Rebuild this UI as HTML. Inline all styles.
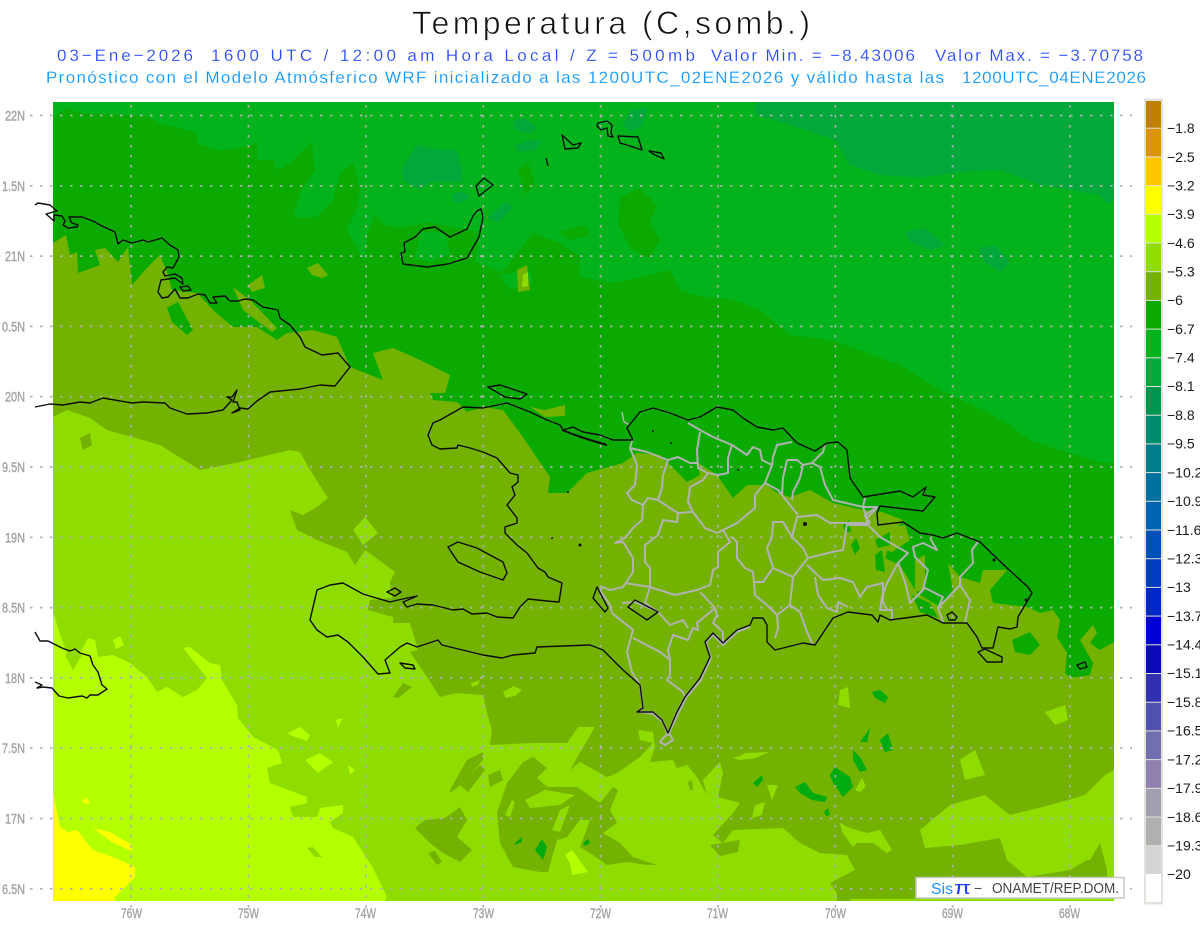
<!DOCTYPE html>
<html><head><meta charset="utf-8"><title>Temperatura</title>
<style>html,body{margin:0;padding:0;background:#fff;overflow:hidden}svg{display:block}text{font-family:"Liberation Sans",sans-serif;white-space:pre}</style></head>
<body>
<svg width="1200" height="927" viewBox="0 0 1200 927" xmlns="http://www.w3.org/2000/svg">
<rect width="1200" height="927" fill="#fff"/>
<!-- titles -->
<text x="412" y="34" font-size="32" fill="#111" stroke="#fff" stroke-width=".7" textLength="398" lengthAdjust="spacing">Temperatura (C,somb.)</text>
<g font-size="17" fill="#2848ff" stroke="#fff" stroke-width=".15">
<text x="57" y="61" textLength="136" lengthAdjust="spacing">03−Ene−2026</text>
<text x="211" y="61" textLength="484" lengthAdjust="spacing">1600 UTC / 12:00 am Hora Local / Z = 500mb</text>
<text x="711" y="61" textLength="204" lengthAdjust="spacing">Valor Min. = −8.43006</text>
<text x="935" y="61" textLength="208" lengthAdjust="spacing">Valor Max. = −3.70758</text>
</g>
<g font-size="17" fill="#0a96ff" stroke="#fff" stroke-width=".15">
<text x="46" y="83" textLength="898" lengthAdjust="spacing">Pronóstico con el Modelo Atmósferico WRF inicializado a las 1200UTC_02ENE2026 y válido hasta las</text>
<text x="962" y="83" textLength="184" lengthAdjust="spacing">1200UTC_04ENE2026</text>
</g>
<!-- map fields -->
<svg x="53" y="102" width="1061" height="799" viewBox="53 102 1061 799">
<rect x="53" y="102" width="1061" height="799" fill="#03b31c"/>
<g fill="#03a83a">
<polygon points="755,102 1114,102 1114,198 1108,205 1100,195 1040,185 1000,170 960,172 920,178 880,175 850,165 835,140 790,125 755,115"/>
<polygon points="402,168 416,145 440,150 457,150 462,170 462,182 430,182 420,190 403,180"/>
<polygon points="513,120 525,118 537,128 530,133 515,130"/>
<polygon points="515,145 530,140 542,141 535,150 518,152"/>
<polygon points="452,195 462,191 470,197 460,203 453,202"/>
<polygon points="488,218 505,202 513,207 498,223"/>
<polygon points="623,125 630,110 647,108 643,125 630,132"/>
<polygon points="905,232 925,228 945,245 930,250 910,242"/>
<polygon points="978,248 995,245 1010,262 1000,272 985,262"/>
</g>
<polygon fill="#0aaa00" points="53,117 67,108 80,113 147,116 160,123 197,133 197,143 217,150 240,148 257,143 257,160 273,160 277,170 290,163 312,142 315,170 300,193 293,217 317,217 333,200 340,173 353,163 360,190 358,205 347,230 365,263 367,235 375,215 385,225 400,228 430,222 450,227 480,232 475,262 500,272 510,262 533,233 560,243 580,257 580,277 613,283 650,275 670,270 680,290 700,296 735,300 760,310 790,335 830,340 860,350 900,365 940,390 983,410 1010,425 1030,440 1060,450 1100,462 1114,463 1114,901 53,901"/>
<g fill="#03b31c">
<polygon points="420,232 445,232 450,255 430,262 415,258"/>
<polygon points="500,275 530,270 533,282 510,290"/>
</g>
<g fill="#0aaa00">
<polygon points="620,197 640,188 657,205 650,222 660,240 650,258 632,250 618,225"/>
<polygon points="518,170 528,162 535,185 525,195"/>
<polygon points="560,232 585,225 590,235 570,240"/>
</g>
<polygon fill="#73b200" points="53,243 66,235 70,255 77,252 78,273 100,265 95,250 105,248 118,262 128,247 132,285 145,270 160,255 168,275 172,290 197,293 215,312 233,327 257,327 277,340 287,333 313,330 337,337 350,367 383,380 373,353 393,348 420,360 450,375 445,393 430,393 433,400 457,402 467,412 483,407 503,410 520,433 550,477 548,493 567,493 587,473 623,463 637,453 660,455 673,468 687,482 700,475 697,462 717,475 733,498 747,485 767,485 777,493 790,497 810,490 833,503 863,510 882,512 903,520 892,535 885,558 900,565 917,593 940,607 953,590 948,563 960,577 980,583 983,570 1007,570 990,590 993,603 1027,607 1040,613 1053,610 1060,620 1057,637 1067,653 1065,673 1070,678 1090,675 1093,663 1080,640 1093,625 1097,633 1090,643 1100,650 1114,642 1114,901 53,901"/>
<g fill="#0aaa00">
<polygon points="167,308 178,302 193,330 187,335 172,322"/>
<polygon points="900,528 925,530 945,555 945,575 920,578 905,560"/>
</g>
<g fill="#73b200">
<polygon points="307,268 318,263 328,275 322,278 312,275"/>
<polygon points="248,285 262,275 265,288 252,292"/>
<polygon points="530,407 545,410 565,405 565,416 545,417"/>
<polygon points="233,287 250,300 277,328 272,332 243,310"/>
<polygon points="517,270 527,265 530,290 518,292"/>
</g>
<polygon fill="#8fdc00" points="523,275 528,272 528,286 522,287"/>
<g fill="#73b200">
<polygon points="875,530 905,525 910,540 892,552 880,548"/>
<polygon points="915,560 925,555 925,590 915,592"/>
<polygon points="1000,605 1030,610 1040,625 1020,640 1000,625"/>
</g>
<g fill="#0aaa00">
<polygon points="1012,640 1030,632 1040,645 1030,655 1015,652"/>
<polygon points="843,525 849,520 851,532 845,532"/>
<polygon points="851,545 856,538 860,548 855,555"/>
<polygon points="875,540 890,532 890,545 878,548"/>
<polygon points="875,555 882,550 885,572 876,570"/>
<polygon points="912,595 930,603 938,618 920,612"/>
</g>
<polygon fill="#8fdc00" points="53,417 67,410 90,418 107,430 160,445 200,470 240,462 290,450 300,452 310,470 328,498 317,507 303,515 290,510 297,530 317,540 347,552 355,565 365,550 383,563 395,572 390,582 392,598 370,600 368,610 393,617 393,623 410,623 418,650 410,652 427,677 440,697 457,693 483,695 487,713 492,730 490,745 533,743 567,743 578,727 595,727 570,770 580,762 607,777 617,773 640,757 653,743 640,740 638,730 653,732 655,747 650,762 673,760 677,768 687,765 697,777 707,795 703,780 720,762 723,773 718,797 740,803 733,813 713,835 723,843 733,830 783,828 800,843 820,853 847,855 855,870 830,883 837,893 837,901 53,901"/>
<g fill="#73b200">
<polygon points="80,438 90,433 92,445 83,450"/>
<polygon points="393,697 403,683 412,687 398,698"/>
<polygon points="415,828 425,820 445,818 460,807 467,820 457,837 472,850 460,862 443,853 430,843"/>
<polygon points="450,790 467,760 483,752 483,760 463,783 450,793"/>
<polygon points="497,813 507,783 523,762 533,757 547,768 537,778 547,787 577,787 600,803 613,787 618,790 610,810 617,823 603,833 620,843 633,857 657,865 647,865 627,862 607,865 590,853 580,847 590,820 580,820 567,837 557,840 548,872 540,872 513,867 500,843"/>
<polygon points="460,785 480,765 485,770 468,792"/>
<polygon points="428,853 435,851 442,862 437,865"/>
<polygon points="488,775 500,770 503,780 490,787"/>
<polygon points="307,848 313,847 322,857 315,857"/>
<polygon points="688,782 692,780 693,790 690,790"/>
<polygon points="710,845 740,840 738,852 720,856"/>
</g>
<g fill="#8fdc00">
<polygon points="505,815 512,800 515,802 510,817"/>
<polygon points="525,800 545,790 575,795 560,805 530,808"/>
<polygon points="560,810 570,805 560,832 552,830"/>
<polygon points="353,530 365,517 378,533 363,545"/>
<polygon points="471,683 480,680 478,685 472,687"/>
<polygon points="503,692 514,686 522,690 515,696 506,698"/>
<polygon points="840,823 850,828 867,833 880,830 892,850 887,853 873,843 857,843 853,847 842,832"/>
<polygon points="733,758 742,755 745,753 770,752 755,758 740,760"/>
<polygon points="755,805 765,802 762,815 752,818"/>
<polygon points="767,785 778,785 772,800"/>
<polygon points="838,705 840,690 848,687 850,708"/>
<polygon points="855,790 862,778 866,786 860,792"/>
<polygon points="920,830 950,805 985,795 1010,815 1050,805 1085,795 1105,775 1114,770 1114,901 850,901 850,899 1107,898 1107,870 1100,843 1090,860 1087,860 1070,870 1027,877 1007,860 1000,838 960,845 925,848"/>
<polygon points="1045,712 1065,705 1068,720 1055,725"/>
<polygon points="960,760 975,750 985,775 965,780"/>
</g>
<polygon fill="#b4ff00" points="53,612 62,640 73,670 80,653 88,638 95,640 98,657 113,655 130,663 147,677 157,692 167,687 183,697 197,690 207,678 183,648 190,647 210,663 220,665 222,680 237,705 238,718 253,737 278,750 282,763 267,768 270,783 307,797 307,803 290,807 293,817 317,817 320,808 343,805 343,813 330,822 333,828 353,837 373,868 387,897 385,901 53,901"/>
<g fill="#8fdc00">
<polygon points="72,650 82,655 73,670 65,655"/>
<polygon points="307,848 313,847 322,857 315,857"/>
</g>
<polygon fill="#b4ff00" points="113,640 120,636 124,645 116,649"/>
<g fill="#b4ff00">
<polygon points="288,733 300,727 310,735 307,741 290,735"/>
<polygon points="305,760 320,753 333,762 318,773"/>
<polygon points="348,765 355,770 350,775"/>
<polygon points="336,720 342,718 338,728"/>
<polygon points="565,855 572,850 588,872 572,875 570,863"/>
</g>
<g fill="#ffff00">
<polygon points="53,792 60,827 68,832 77,830 93,850 113,857 135,867 135,877 115,897 115,901 53,901"/>
<polygon points="93,828 110,832 132,845 132,851 113,843"/>
<polygon points="82,800 87,798 90,804 85,804"/>
</g>
<g fill="#00ab10">
<polygon points="872,692 880,690 888,697 885,703 875,698"/>
<polygon points="880,740 888,733 893,750 885,752"/>
<polygon points="860,742 870,728 867,742"/>
<polygon points="853,750 860,757 867,770 860,772 853,760"/>
<polygon points="830,775 835,767 850,777 853,787 843,797 833,783"/>
<polygon points="795,787 805,782 813,793 827,797 825,802 812,800 800,793"/>
<polygon points="753,783 762,775 763,780 757,787"/>
<polygon points="824,812 828,808 830,815 826,816"/>
<polygon points="535,850 542,839 547,847 543,860"/>
<polygon points="515,843 522,837 522,842 515,845"/>
<polygon points="583,843 588,839 590,843 585,846"/>
</g>
</svg>
<!-- grid -->
<g stroke="#b0b0b0" stroke-width="1.7" stroke-dasharray="2.5 7.5" fill="none">
<path d="M30 115.5H1132M30 185.8H1132M30 256.1H1132M30 326.4H1132M30 396.7H1132M30 467H1132M30 537.3H1132M30 607.6H1132M30 677.9H1132M30 748.2H1132M30 818.5H1132M30 888.8H1132"/>
<path d="M131 105V908M248.5 105V908M366 105V908M483.3 105V908M600.6 105V908M718 105V908M835.3 105V908M952.6 105V908M1070 105V908"/>
</g>
<!-- provinces -->
<g fill="none" stroke="#b2b2b2" stroke-width="2" stroke-linejoin="round">
<polyline points="633,438 630,448 637,465 635,485 627,493 632,500 643,505 642,520 633,528 625,538 615,543 623,542 633,558 633,572 623,587 610,590 603,587 600,590 610,605 612,613 633,630 627,652 632,672 640,685 643,708 637,712 653,712 662,720 668,733 677,712 685,697"/>
<polyline points="688,423 700,430 713,437 732,445 747,455 753,447 760,450 762,460 772,465 773,457 777,445 792,442"/>
<polyline points="700,432 697,450 698,468 708,473 718,475 728,473 728,458 732,445"/>
<polyline points="630,448 647,452 660,457 668,460 678,457 690,463 697,463"/>
<polyline points="668,460 663,475 662,488 658,500 673,510 678,513 692,512"/>
<polyline points="643,505 648,498 658,500"/>
<polyline points="708,473 703,480 690,487 688,502 693,512 705,528 717,533 723,530 737,523 755,508 755,495 765,483 772,465"/>
<polyline points="678,513 677,522 663,520 658,535 645,545 645,562 650,568 650,587"/>
<polyline points="625,583 650,587 675,595 697,590 710,585 713,570 718,567 718,552 730,542 723,530"/>
<polyline points="732,537 737,542 737,558 745,568 753,572 755,595 767,605 777,615 778,628 775,638"/>
<polyline points="755,582 763,582 773,568 793,577 790,605 777,615"/>
<polyline points="773,568 767,548 772,537 773,522 783,522 792,537 803,548 808,558 800,568 793,577"/>
<polyline points="792,537 797,517 817,515 830,523 847,523 843,550 832,552 808,558"/>
<polyline points="807,565 823,580 840,578 853,582 860,597 867,587 883,583 883,602 887,610"/>
<polyline points="815,577 818,595 827,608 837,612 838,602 848,607"/>
<polyline points="790,605 800,612 807,632 813,645"/>
<polyline points="787,460 783,478 782,495 790,505 798,515"/>
<polyline points="787,460 797,460 803,465 812,463 823,452 825,445"/>
<polyline points="803,465 800,478 793,492 792,500"/>
<polyline points="812,463 820,467 825,485 833,500 863,507 867,518 877,508"/>
<polyline points="765,483 778,490 782,495"/>
<polyline points="847,523 870,523 867,518"/>
<polyline points="633,638 660,652 670,660 670,675 667,680 683,692 685,697"/>
<polyline points="670,660 668,650 673,635 688,640 693,628 698,630 697,623 715,608 700,592"/>
<polyline points="715,608 717,615 713,623 723,632 723,642"/>
<polyline points="650,587 645,603 658,612 670,625 683,620 688,628"/>
<polyline points="622,603 635,602 658,612"/>
<polyline points="865,498 863,507 877,507 865,515 868,525 880,537 908,553 898,563 887,583 882,597 880,610 892,610 892,620"/>
<polyline points="868,525 847,525"/>
<polyline points="898,563 905,582 910,603 923,590 928,570 915,557 913,547 923,543 937,550 930,538"/>
<polyline points="923,587 943,597 938,608 943,622"/>
<polyline points="938,608 960,585 960,577 973,563 972,550 978,542"/>
<polyline points="960,585 970,600 965,622"/>
<polyline points="622,412 624,422 630,425" stroke-width="1.5"/>
<polyline points="642,708 640,712 653,714 663,722 668,735 678,714 686,698 701,680 711,658 706,642 713,635 723,645 737,632 750,627"/>
<polyline points="663,738 669,733 673,740 665,745 660,742 663,738"/>
</g>
<!-- coast -->
<g fill="none" stroke="#0c0c0c" stroke-width="1.4" stroke-linejoin="round">
<polyline points="35,205 38,203 50,205 57,211 46,214 54,221 54,215 62,216 65,221 63,225 68,228 77,227 78,225 72,223 69,217 82,217 93,221 100,225 115,232 118,244 123,240 132,243 143,240 148,242 162,238 170,245 178,250 179,257 173,268 167,267 163,272 165,276 175,274 182,278 183,284 175,278 161,280 158,292 162,298 168,297 175,289 180,298 188,298 198,294 205,295 210,303 217,303 213,297 225,296 230,301 238,301 245,299 253,300 263,307 278,310 280,318 290,325 300,337 305,347 322,355 338,353 350,367 335,386 320,385 300,389 270,392 257,401 248,409 240,408 232,413 240,410 237,402 233,402 237,390 232,397 227,397 232,400 223,410 207,413 187,414 170,408 165,403 143,402 132,403 103,398 90,403 80,402 63,405 50,404 35,407"/>
<polygon points="180,287 188,286 191,290 183,291"/>
<polyline points="35,632 40,641 48,641 62,648 70,651 75,649 80,653 90,656 93,665 98,672 102,685 107,689 98,695 90,695 87,698 82,696 68,698 59,696 52,688 43,687 37,688 42,685 35,682"/>
<polygon points="401,253 405,252 404,243 415,237 423,229 435,227 450,237 467,229 473,216 477,211 481,209 483,217 479,237 467,258 448,264 427,267 403,264"/>
<polygon points="476,186 484,178 493,185 479,196"/>
<polygon points="562,135 573,145 581,143 578,148 565,149"/>
<polyline points="546,158 548,166"/>
<polygon points="598,123 607,121 612,125 611,133 613,137 608,136 607,128 601,130 597,126"/>
<polygon points="618,136 638,137 642,150 630,146 620,143"/>
<polygon points="649,151 661,153 664,159 653,154"/>
<polyline points="633,440 613,440 600,435 583,432 573,427 563,430 560,425 547,420 530,412 507,403 483,408 463,407 440,420 433,423 428,435 432,445 440,449 457,448 458,445 470,448 483,452 497,458 510,473 518,475 518,482 512,487 515,495 507,505 517,518 517,523 505,527 505,533 517,545 527,553 538,568 545,572 548,577 562,583 559,602 547,601 528,599 520,607 513,618 497,617 487,613 472,614 463,609 453,610 433,605 417,604 407,607 403,602 415,597 417,596 398,600 390,602 373,597 363,594 343,583 330,585 317,590 310,620 317,630 327,637 338,635 348,642 363,657 378,674 390,673 385,660 400,647 407,643 417,647 438,640 442,645 483,655 502,658 513,655 535,653 537,647 563,646 590,645 603,650 623,670 640,685 643,708 637,712 653,712 662,720 668,733 677,712 685,697 700,678 710,657 705,642 713,633 723,643 737,630 750,625 753,618 763,618 767,625 767,642 775,650 803,643 815,645 833,618 848,612 872,615 878,622 880,615 890,620 927,615 943,623 967,623 977,637 982,648 993,648 998,627 1010,629 1017,627 1018,617 1032,593 1028,587 1007,568 980,542 957,533 943,538 933,535 920,533 903,522 878,525 877,513 880,506 923,511 935,497 923,495 926,487 913,497 900,491 863,497 850,478 847,450 838,442 827,443 815,451 797,443 783,428 773,430 757,427 743,418 733,410 717,407 700,417 688,420 670,413 653,408 640,412 627,428 633,440"/>
<polygon points="978,652 985,649 1002,657 1002,662 987,662"/>
<polygon points="947,615 952,612 957,617 955,620 949,620"/>
<polygon points="1077,665 1085,662 1087,667 1080,669"/>
<polygon points="488,387 500,385 527,394 520,399 505,397"/>
<polygon points="448,547 458,542 477,548 503,562 507,573 503,580 480,572 458,562"/>
<polygon points="387,592 395,588 401,592 395,596"/>
<polygon points="400,663 413,665 415,669 405,668"/>
<polygon points="628,607 635,600 658,612 647,620"/>
<polygon points="593,598 597,587 608,608 605,612"/>
<polyline points="562,430 575,435 590,440 607,445" stroke-width="2"/>
</g>
<g fill="#111">
<circle cx="653" cy="431" r="1"/><circle cx="671" cy="443" r="1"/><circle cx="738" cy="470" r="1"/><circle cx="805" cy="524" r="2"/><circle cx="994" cy="560" r="1.5"/><circle cx="1026" cy="600" r="1.5"/><circle cx="568" cy="492" r="1"/><circle cx="552" cy="538" r="1"/><circle cx="580" cy="545" r="1.5"/>
</g>
<!-- axis labels -->
<g font-size="14" fill="#a4a4a4" stroke="#a4a4a4" stroke-width=".4">
<text x="5" y="120.5" textLength="20" lengthAdjust="spacingAndGlyphs">22N</text>
<text x="2" y="190.8" textLength="23" lengthAdjust="spacingAndGlyphs">1.5N</text>
<text x="5" y="261" textLength="20" lengthAdjust="spacingAndGlyphs">21N</text>
<text x="2" y="331.4" textLength="23" lengthAdjust="spacingAndGlyphs">0.5N</text>
<text x="5" y="401.7" textLength="20" lengthAdjust="spacingAndGlyphs">20N</text>
<text x="2" y="472" textLength="23" lengthAdjust="spacingAndGlyphs">9.5N</text>
<text x="5" y="542.3" textLength="20" lengthAdjust="spacingAndGlyphs">19N</text>
<text x="2" y="612.6" textLength="23" lengthAdjust="spacingAndGlyphs">8.5N</text>
<text x="5" y="682.9" textLength="20" lengthAdjust="spacingAndGlyphs">18N</text>
<text x="2" y="753.2" textLength="23" lengthAdjust="spacingAndGlyphs">7.5N</text>
<text x="5" y="823.5" textLength="20" lengthAdjust="spacingAndGlyphs">17N</text>
<text x="2" y="893.8" textLength="23" lengthAdjust="spacingAndGlyphs">6.5N</text>
<text x="121" y="918" textLength="21" lengthAdjust="spacingAndGlyphs">76W</text>
<text x="238" y="918" textLength="21" lengthAdjust="spacingAndGlyphs">75W</text>
<text x="355" y="918" textLength="21" lengthAdjust="spacingAndGlyphs">74W</text>
<text x="473" y="918" textLength="21" lengthAdjust="spacingAndGlyphs">73W</text>
<text x="590" y="918" textLength="21" lengthAdjust="spacingAndGlyphs">72W</text>
<text x="707" y="918" textLength="21" lengthAdjust="spacingAndGlyphs">71W</text>
<text x="825" y="918" textLength="21" lengthAdjust="spacingAndGlyphs">70W</text>
<text x="942" y="918" textLength="21" lengthAdjust="spacingAndGlyphs">69W</text>
<text x="1059" y="918" textLength="21" lengthAdjust="spacingAndGlyphs">68W</text>
</g>
<!-- logo box -->
<rect x="916" y="877.5" width="208" height="20.5" fill="#fff" stroke="#c8c8c8" stroke-width="1.5"/>
<text x="931" y="894" font-size="16" fill="#1e90ff" textLength="22" lengthAdjust="spacingAndGlyphs">Sis</text>
<text x="954" y="894" font-size="18" fill="#2040ff" textLength="17" lengthAdjust="spacingAndGlyphs">π</text>
<text x="974" y="893" font-size="14" fill="#444">−</text>
<text x="992" y="893" font-size="14.5" fill="#444" textLength="127" lengthAdjust="spacingAndGlyphs">ONAMET/REP.DOM.</text>
<!-- colorbar -->
<rect x="1144" y="98.5" width="19" height="806" fill="#e2e2dc"/>
<rect x="1146" y="101" width="15" height="26.7" fill="#c08000"/>
<rect x="1146" y="128.7" width="15" height="27.7" fill="#dc9400"/>
<rect x="1146" y="157.4" width="15" height="27.7" fill="#ffc400"/>
<rect x="1146" y="186.1" width="15" height="27.7" fill="#ffff00"/>
<rect x="1146" y="214.8" width="15" height="27.7" fill="#b4ff00"/>
<rect x="1146" y="243.5" width="15" height="27.7" fill="#8fdc00"/>
<rect x="1146" y="272.2" width="15" height="27.7" fill="#73b200"/>
<rect x="1146" y="300.9" width="15" height="27.7" fill="#0aaa00"/>
<rect x="1146" y="329.6" width="15" height="27.7" fill="#03b31c"/>
<rect x="1146" y="358.3" width="15" height="27.7" fill="#03a83a"/>
<rect x="1146" y="387" width="15" height="27.7" fill="#009650"/>
<rect x="1146" y="415.7" width="15" height="27.7" fill="#008c6e"/>
<rect x="1146" y="444.4" width="15" height="27.7" fill="#007d8c"/>
<rect x="1146" y="473.1" width="15" height="27.7" fill="#0070a0"/>
<rect x="1146" y="501.8" width="15" height="27.7" fill="#0064b4"/>
<rect x="1146" y="530.5" width="15" height="27.7" fill="#0050bc"/>
<rect x="1146" y="559.2" width="15" height="27.7" fill="#003cc0"/>
<rect x="1146" y="587.9" width="15" height="27.7" fill="#0028c8"/>
<rect x="1146" y="616.6" width="15" height="27.7" fill="#0000d4"/>
<rect x="1146" y="645.3" width="15" height="27.7" fill="#0a0ab8"/>
<rect x="1146" y="674" width="15" height="27.7" fill="#3030b0"/>
<rect x="1146" y="702.7" width="15" height="27.7" fill="#5050b0"/>
<rect x="1146" y="731.4" width="15" height="27.7" fill="#7070b0"/>
<rect x="1146" y="760.1" width="15" height="27.7" fill="#9080b0"/>
<rect x="1146" y="788.8" width="15" height="27.7" fill="#a0a0b0"/>
<rect x="1146" y="817.5" width="15" height="27.7" fill="#b0b0b0"/>
<rect x="1146" y="846.2" width="15" height="27.7" fill="#d4d4d4"/>
<rect x="1146" y="874" width="15" height="28" fill="#fff"/>
<g font-size="14" fill="#1a1a1a">
<text x="1167" y="133">−1.8</text><text x="1167" y="162">−2.5</text><text x="1167" y="190.5">−3.2</text><text x="1167" y="219">−3.9</text><text x="1167" y="248">−4.6</text><text x="1167" y="276.5">−5.3</text><text x="1167" y="305">−6</text><text x="1167" y="334">−6.7</text><text x="1167" y="362.5">−7.4</text><text x="1167" y="391">−8.1</text><text x="1167" y="420">−8.8</text><text x="1167" y="448.5">−9.5</text><text x="1167" y="477.5">−10.2</text><text x="1167" y="506">−10.9</text><text x="1167" y="535">−11.6</text><text x="1167" y="563.5">−12.3</text><text x="1167" y="592">−13</text><text x="1167" y="621">−13.7</text><text x="1167" y="649.5">−14.4</text><text x="1167" y="678">−15.1</text><text x="1167" y="707">−15.8</text><text x="1167" y="735.5">−16.5</text><text x="1167" y="764.5">−17.2</text><text x="1167" y="793">−17.9</text><text x="1167" y="822">−18.6</text><text x="1167" y="850.5">−19.3</text><text x="1167" y="879">−20</text>
</g>
</svg>
</body></html>
